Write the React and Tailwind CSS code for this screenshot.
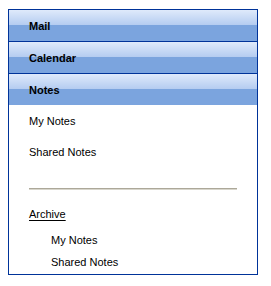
import React from 'react';

const headerBg =
  'bg-[linear-gradient(to_bottom,#dfeafb_0%,#b3cbf0_50%,#7ba4de_50%,#7ba4de_100%)]';

const Header = ({ label, last }) => (
  <div
    className={`${headerBg} flex items-center pl-[20px] pt-[2px] font-bold text-[11px] text-black ${
      last ? 'h-[31px]' : 'h-[32px] border-b border-[#003399]'
    }`}
  >
    {label}
  </div>
);

const App = () => {
  return (
    <div
      className="pt-[9px] pl-[8px] bg-white min-h-screen"
      style={{ fontFamily: '"Liberation Sans", Arial, sans-serif' }}
    >
      <div className="w-[250px] h-[266px] border border-[#003399] bg-white flex flex-col">
        <Header label="Mail" />
        <Header label="Calendar" />
        <Header label="Notes" last />

        {/* notes panel */}
        <div className="flex flex-col text-[11px] text-black">
          <div className="h-[31px] flex items-center pl-[20px] pt-[2px]">My Notes</div>
          <div className="h-[31px] flex items-center pl-[20px] pt-[2px]">Shared Notes</div>

          <div className="mt-[21px] ml-[20px] w-[208px] h-[2px] border-t border-[#aca899] border-b border-b-[#d8d6cc]" />

          <div className="mt-[12px] h-[22px] flex items-center pl-[20px] pt-[2px]">
            <span className="underline underline-offset-2">Archive</span>
          </div>
          <div className="mt-[5px] h-[22px] flex items-center pl-[42px]">My Notes</div>
          <div className="h-[22px] flex items-center pl-[42px]">Shared Notes</div>
        </div>
      </div>
    </div>
  );
};

export default App;
